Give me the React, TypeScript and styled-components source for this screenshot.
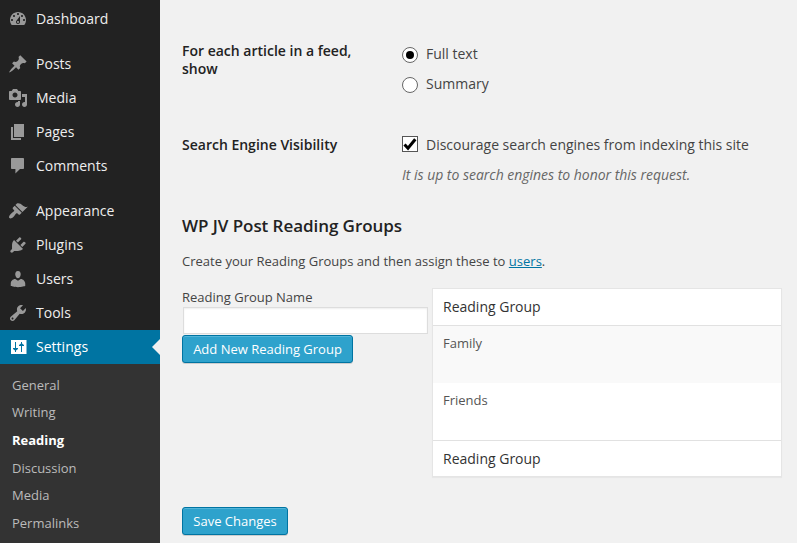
import React from "react";
import styled, { createGlobalStyle, css } from "styled-components";

const GlobalStyle = createGlobalStyle`
  *, *::before, *::after { box-sizing: border-box; }
  body {
    margin: 0;
    background: #f1f1f1;
    color: #444;
    font: 13px/18px "Open Sans", sans-serif;
    overflow: hidden;
  }
`;

const Page = styled.div`
  display: flex;
  width: 797px;
  height: 543px;
  overflow: hidden;
`;

const Sidebar = styled.nav`
  flex: none;
  width: 160px;
  height: 543px;
  padding-top: 2px;
  background: #222;
`;

const MenuGroup = styled.div`
  margin-bottom: 11px;
  &:last-of-type { margin-bottom: 0; }
`;

const MenuItem = styled.a<{ $current?: boolean }>`
  position: relative;
  display: flex;
  align-items: center;
  gap: 8px;
  height: 34px;
  padding-left: 8px;
  color: #eee;
  font-size: 14px;
  line-height: 18px;
  letter-spacing: 0.02px;

  svg { flex: none; fill: #999; }

  ${(p) =>
    p.$current &&
    css`
      background: #0074a2;
      color: #fff;
      svg { fill: #fff; }
      &::after {
        content: "";
        position: absolute;
        right: 0;
        top: 9px;
        border: 8px solid transparent;
        border-left-width: 0;
        border-right-color: #f1f1f1;
      }
    `}
`;

const Submenu = styled.div`
  height: 179px;
  padding-top: 6.8px;
  background: #333;
`;

const SubItem = styled.a<{ $current?: boolean }>`
  display: block;
  height: 27.6px;
  padding: 5px 12px;
  color: ${(p) => (p.$current ? "#fff" : "#bbb")};
  font-weight: ${(p) => (p.$current ? 700 : 400)};
  line-height: 18px;
`;

const Content = styled.main`
  flex: 1;
  padding: 42px 0 0 22px;
`;

const FormRow = styled.div<{ $height: number }>`
  display: grid;
  grid-template-columns: 220px 1fr;
  height: ${(p) => p.$height}px;
`;

const RowTitle = styled.div`
  width: 190px;
  color: #222;
  font-size: 14px;
  font-weight: 600;
  line-height: 18px;
`;

const Choices = styled.div<{ $offset?: number }>`
  display: flex;
  flex-direction: column;
  gap: 12px;
  padding-top: ${(p) => p.$offset ?? 0}px;
`;

const Choice = styled.label`
  display: flex;
  align-items: center;
  gap: 8px;
  height: 18px;
  font-size: 14px;
  letter-spacing: -0.005px;
  white-space: nowrap;
`;

const Radio = styled.span<{ $checked?: boolean }>`
  display: grid;
  place-items: center;
  width: 16px;
  height: 16px;
  margin-top: 2px;
  border: 1px solid #666;
  border-radius: 50%;
  background: #fff;
  &::after {
    content: "";
    display: ${(p) => (p.$checked ? "block" : "none")};
    width: 8px;
    height: 8px;
    border-radius: 50%;
    background: #000;
  }
`;

const Checkbox = styled.span`
  display: flex;
  width: 16px;
  height: 16px;
  margin-top: -2px;
  border: 1px solid #555;
  background: #fff;
`;

const Description = styled.p`
  margin: 0;
  color: #666;
  font-size: 14px;
  font-style: italic;
  letter-spacing: -0.02px;
  line-height: 18px;
`;

const SectionTitle = styled.h3`
  margin: 0;
  color: #222;
  font-size: 17px;
  font-weight: 600;
  letter-spacing: -0.06px;
  line-height: 24px;
`;

const Intro = styled.p`
  margin: 13px 0 0;
  line-height: 20px;
  letter-spacing: 0.01px;
  a { color: #0074a2; text-decoration: underline; }
`;

const Groups = styled.div`
  display: flex;
  gap: 4px;
  height: 189px;
  margin-top: 17px;
`;

const AddForm = styled.div`
  width: 246px;
`;

const FieldLabel = styled.label`
  display: block;
  height: 19px;
  line-height: 18px;
`;

const TextField = styled.input`
  display: block;
  width: 245px;
  height: 27px;
  margin: 0 0 1px 1px;
  padding: 3px 5px;
  border: 1px solid #ddd;
  border-radius: 0;
  background: #fff;
  box-shadow: inset 0 1px 2px rgba(0, 0, 0, 0.07);
`;

const Button = styled.button<{ $width: number }>`
  display: block;
  width: ${(p) => p.$width}px;
  height: 28px;
  padding: 0;
  border: 1px solid #0074a2;
  border-radius: 3px;
  background: #2ea2cc;
  box-shadow: inset 0 1px 0 rgba(120, 200, 230, 0.5), 0 1px 0 rgba(0, 0, 0, 0.15);
  color: #fff;
  font: 13px/26px "Open Sans", sans-serif;
  white-space: nowrap;
`;

const Table = styled.div`
  width: 350px;
  height: 189px;
  border: 1px solid #e5e5e5;
  background: #fff;
  box-shadow: 0 1px 1px rgba(0, 0, 0, 0.04);
`;

const TableHeading = styled.div<{ $foot?: boolean }>`
  height: ${(p) => (p.$foot ? 36 : 37)}px;
  padding: 9px 10px;
  border: 0 solid #e1e1e1;
  border-width: ${(p) => (p.$foot ? "1px 0 0" : "0 0 1px")};
  color: #333;
  font-size: 14px;
  line-height: 18px;
`;

const TableRow = styled.div<{ $alternate?: boolean }>`
  height: 57px;
  padding: 8px 10px;
  background: ${(p) => (p.$alternate ? "#f9f9f9" : "#fff")};
  color: #555;
`;

const Submit = styled.div`
  margin-top: 30px;
`;

const icons = {
  dashboard:
    "M3.76 16h12.48c1.1-1.37 1.76-3.11 1.76-5 0-4.42-3.58-8-8-8s-8 3.58-8 8c0 1.89.66 3.63 1.76 5zM10 4c.55 0 1 .45 1 1s-.45 1-1 1-1-.45-1-1 .45-1 1-1zM6 6c.55 0 1 .45 1 1s-.45 1-1 1-1-.45-1-1 .45-1 1-1zm8 0c.55 0 1 .45 1 1s-.45 1-1 1-1-.45-1-1 .45-1 1-1zm-5.37 5.55L12 7v6c0 1.1-.9 2-2 2s-2-.9-2-2c0-.57.24-1.08.63-1.45zM4 10c.55 0 1 .45 1 1s-.45 1-1 1-1-.45-1-1 .45-1 1-1zm12 0c.55 0 1 .45 1 1s-.45 1-1 1-1-.45-1-1 .45-1 1-1zm-5 3c0-.55-.45-1-1-1s-1 .45-1 1 .45 1 1 1 1-.45 1-1z",
  pin: "M10.44 3.02l1.82-1.82 6.36 6.35-1.83 1.82c-1.05-.68-2.48-.57-3.41.36l-.75.75c-.92.93-1.04 2.35-.35 3.41l-1.83 1.82-2.41-2.41-2.8 2.79c-.42.42-3.38 2.71-3.8 2.29s1.86-3.39 2.28-3.81l2.79-2.79L4.1 9.36l1.83-1.82c1.05.69 2.48.57 3.4-.36l.75-.75c.93-.92 1.05-2.35.36-3.41z",
  media:
    "M13 11V4c0-.55-.45-1-1-1h-1.67L9 1H5L3.67 3H2c-.55 0-1 .45-1 1v7c0 .55.45 1 1 1h10c.55 0 1-.45 1-1zM7 4.5c1.38 0 2.5 1.12 2.5 2.5S8.38 9.5 7 9.5 4.5 8.38 4.5 7 5.62 4.5 7 4.5zM14 6h5v10.5c0 1.38-1.12 2.5-2.5 2.5S14 17.88 14 16.5s1.12-2.5 2.5-2.5c.17 0 .34.02.5.05V9h-3V6zm-4 8.05V13h2v3.5c0 1.38-1.12 2.5-2.5 2.5S7 17.88 7 16.5 8.12 14 9.5 14c.17 0 .34.02.5.05z",
  page: "M6 15V2h10v13H6zm-1 1h8v2H3V5h2v11z",
  comment: "M4 2h11c.55 0 1 .45 1 1v9c0 .55-.45 1-1 1h-3l-4.6 4.6V13H4c-.55 0-1-.45-1-1V3c0-.55.45-1 1-1z",
  brush:
    "M14.48 11.06L7.41 3.99l1.5-1.5c.5-.56 2.3-.47 3.51.32 1.21.8 1.43 1.28 2.91 2.1 1.18.64 2.45 1.26 4.45.85zm-.71.71L6.7 4.7 4.93 6.47c-.39.39-.39 1.02 0 1.41l1.06 1.06c.39.39.39 1.03 0 1.42-.6.6-1.43 1.11-2.21 1.69-.35.26-.7.53-1.01.84C1.43 14.23.4 16.08 1.4 17.07c.99 1 2.84-.03 4.18-1.36.31-.31.58-.66.85-1.02.57-.78 1.08-1.61 1.69-2.21.39-.39 1.02-.39 1.41 0l1.06 1.06c.39.39 1.02.39 1.41 0z",
  plug: "M13.11 4.36L9.87 7.6 8 5.73l3.24-3.24c.35-.34 1.05-.2 1.56.32.52.51.66 1.21.31 1.55zm-8 1.77l.91-1.12 9.01 9.01-1.19.84c-.71.71-2.63 1.16-3.82 1.16H6.14L4.9 17.26c-.59.59-1.54.59-2.12 0-.59-.58-.59-1.53 0-2.12l1.24-1.24v-3.88c0-1.13.4-3.19 1.09-3.89zm7.26 3.97l3.24-3.24c.34-.35 1.04-.21 1.55.31.52.51.66 1.21.31 1.55l-3.24 3.25z",
  user: "M10 9.25c-2.27 0-2.73-3.44-2.73-3.44C7 4.02 7.82 2 9.97 2c2.16 0 2.98 2.02 2.71 3.81 0 0-.41 3.44-2.68 3.44zm0 2.57L12.72 10c2.39 0 4.52 2.33 4.52 4.53v2.49s-3.65 1.13-7.24 1.13c-3.65 0-7.24-1.13-7.24-1.13v-2.49c0-2.25 1.94-4.48 4.47-4.48z",
  wrench:
    "M16.68 9.77c-1.34 1.34-3.3 1.67-4.95.99l-5.41 6.52c-.99.99-2.59.99-3.58 0s-.99-2.59 0-3.57l6.52-5.42c-.68-1.65-.35-3.61.99-4.95 1.28-1.28 3.12-1.62 4.72-1.06l-2.89 2.89 2.82 2.82 2.86-2.87c.53 1.58.18 3.39-1.08 4.65zM3.81 16.21c.4.39 1.04.39 1.43 0 .4-.4.4-1.04 0-1.43-.39-.4-1.03-.4-1.43 0-.39.39-.39 1.03 0 1.43z",
  sliders:
    "M3 3h15.5v14H3zM7 5v6H5v1l2 1.5V15h1v-1.500L10 12v-1H8V5zM13 5v1.500L11 8v1h2v6h1V9h2V8l-2-1.500V5z",
};

type IconName = keyof typeof icons;

const Icon = ({ name }: { name: IconName }) => (
  <svg width="20" height="20" viewBox="0 0 20 20" aria-hidden="true">
    <path fillRule="evenodd" d={icons[name]} />
  </svg>
);

const menu: { icon: IconName; label: string }[][] = [
  [{ icon: "dashboard", label: "Dashboard" }],
  [
    { icon: "pin", label: "Posts" },
    { icon: "media", label: "Media" },
    { icon: "page", label: "Pages" },
    { icon: "comment", label: "Comments" },
  ],
  [
    { icon: "brush", label: "Appearance" },
    { icon: "plug", label: "Plugins" },
    { icon: "user", label: "Users" },
    { icon: "wrench", label: "Tools" },
    { icon: "sliders", label: "Settings" },
  ],
];

const submenu = ["General", "Writing", "Reading", "Discussion", "Media", "Permalinks"];

export default function App() {
  return (
    <Page>
      <GlobalStyle />
      <Sidebar>
        {menu.map((group) => (
          <MenuGroup key={group[0].label}>
            {group.map((item) => (
              <MenuItem key={item.label} $current={item.label === "Settings"}>
                <Icon name={item.icon} />
                {item.label}
              </MenuItem>
            ))}
          </MenuGroup>
        ))}
        <Submenu as="section">
          {submenu.map((label) => (
            <SubItem key={label} $current={label === "Reading"}>
              {label}
            </SubItem>
          ))}
        </Submenu>
      </Sidebar>

      <Content>
        <FormRow $height={94}>
          <RowTitle>For each article in a feed, show</RowTitle>
          <Choices $offset={3}>
            <Choice>
              <Radio $checked />
              Full text
            </Choice>
            <Choice>
              <Radio />
              Summary
            </Choice>
          </Choices>
        </FormRow>
        <FormRow $height={78}>
          <RowTitle>Search Engine Visibility</RowTitle>
          <Choices>
            <Choice>
              <Checkbox>
                <svg width="14" height="14" viewBox="0 0 14 14">
                  <path d="M1.500 7.500L5 11.300L12.300 2.300" fill="none" stroke="#000" strokeWidth="3" />
                </svg>
              </Checkbox>
              Discourage search engines from indexing this site
            </Choice>
            <Description>It is up to search engines to honor this request.</Description>
          </Choices>
        </FormRow>

        <SectionTitle>WP JV Post Reading Groups</SectionTitle>
        <Intro>
          Create your Reading Groups and then assign these to <a>users</a>.
        </Intro>

        <Groups>
          <AddForm>
            <FieldLabel htmlFor="group-name">Reading Group Name</FieldLabel>
            <TextField id="group-name" type="text" />
            <Button $width={171}>Add New Reading Group</Button>
          </AddForm>
          <Table>
            <TableHeading>Reading Group</TableHeading>
            <TableRow $alternate>Family</TableRow>
            <TableRow>Friends</TableRow>
            <TableHeading $foot>Reading Group</TableHeading>
          </Table>
        </Groups>

        <Submit>
          <Button $width={106}>Save Changes</Button>
        </Submit>
      </Content>
    </Page>
  );
}
